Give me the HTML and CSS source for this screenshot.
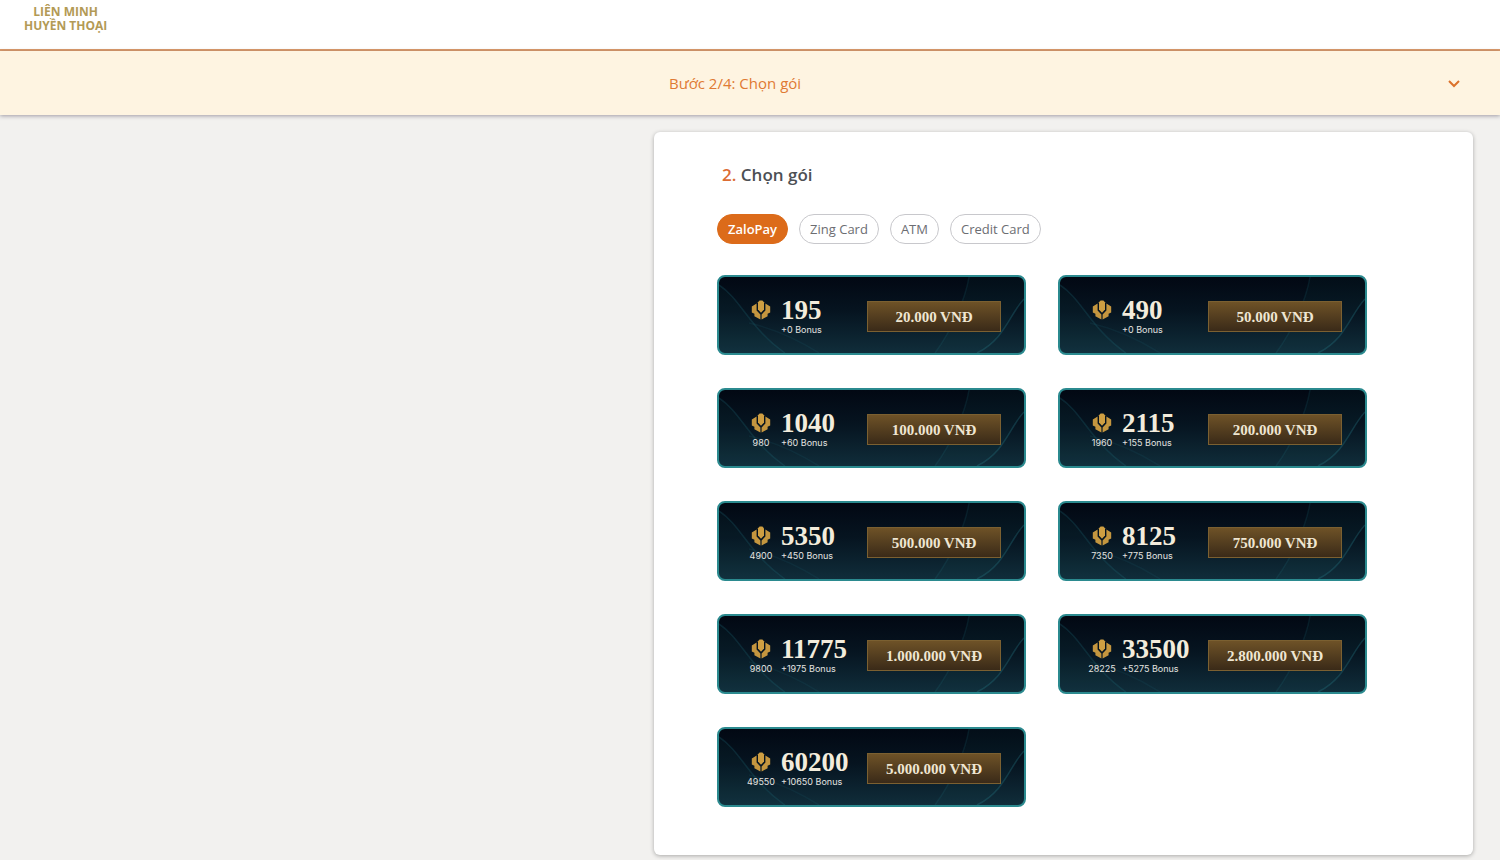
FILE: index.html
```html
<!DOCTYPE html>
<html lang="vi">
<head>
<meta charset="utf-8">
<meta name="viewport" content="width=device-width, initial-scale=1">
<title>Liên Minh Huyền Thoại</title>
<link rel="stylesheet" href="styles.css">
</head>
<body>
<svg class="defs" aria-hidden="true">
  <symbol id="coin" viewBox="0 0 20 20">
    <path fill="#cf9f42" d="M7 2.2 8.6.4h2.8L13 2.2v7.4L10 12.8 7 9.6z"/>
    <path fill="#c4963f" d="M5.6 3.6v7l3.8 3.8v5.2L3.4 16.2v-2.4L.8 12.4V6.6z"/>
    <path fill="#c4963f" d="M14.4 3.6v7l-3.8 3.8v5.2l6-3.4v-2.4l2.6-1.4V6.6z"/>
  </symbol>
  <symbol id="swirl" viewBox="0 0 305 76" preserveAspectRatio="none">
    <g fill="none" stroke="#2a8290" stroke-width="1.5">
      <path stroke-opacity=".2" d="M0 8C22 22 31 52 66 76"/>
      <path stroke-opacity=".1" d="M30 46C56 52 78 62 100 76"/>
      <path stroke-opacity=".15" d="M250 0C246 24 232 54 216 76"/>
      <path stroke-opacity=".3" d="M305 22C290 38 286 62 258 76"/>
    </g>
    <path fill="#2a8290" fill-opacity=".05" d="M305 22C290 38 286 62 258 76H216C232 54 246 24 250 0H305zM0 8C22 22 31 52 66 76H0z"/>
  </symbol>
</svg>

<header class="header">
  <a class="logo" href="#">LIÊN MINH<br>HUYỀN THOẠI</a>
</header>

<button class="stepbar" type="button">
  <span class="stepbar-text">Bước 2/4: Chọn gói</span>
  <svg class="chevron" viewBox="0 0 14 14" aria-hidden="true"><path d="M2 5 7 10 12 5"/></svg>
</button>

<main class="main">
  <section class="panel">
    <h1 class="title"><span class="title-no">2.</span> Chọn gói</h1>
    <div class="methods">
      <button class="pill pill-active" type="button">ZaloPay</button>
      <button class="pill" type="button">Zing Card</button>
      <button class="pill" type="button">ATM</button>
      <button class="pill" type="button">Credit Card</button>
    </div>
    <div class="packs">
      <article class="pack"><svg class="swirl"><use href="#swirl"/></svg><div class="info"><svg class="coin"><use href="#coin"/></svg><strong class="total">195</strong><span class="base"></span><span class="bonus">+0 Bonus</span></div><button class="price" type="button">20.000 VNĐ</button></article>
      <article class="pack"><svg class="swirl"><use href="#swirl"/></svg><div class="info"><svg class="coin"><use href="#coin"/></svg><strong class="total">490</strong><span class="base"></span><span class="bonus">+0 Bonus</span></div><button class="price" type="button">50.000 VNĐ</button></article>
      <article class="pack"><svg class="swirl"><use href="#swirl"/></svg><div class="info"><svg class="coin"><use href="#coin"/></svg><strong class="total">1040</strong><span class="base">980</span><span class="bonus">+60 Bonus</span></div><button class="price" type="button">100.000 VNĐ</button></article>
      <article class="pack"><svg class="swirl"><use href="#swirl"/></svg><div class="info"><svg class="coin"><use href="#coin"/></svg><strong class="total">2115</strong><span class="base">1960</span><span class="bonus">+155 Bonus</span></div><button class="price" type="button">200.000 VNĐ</button></article>
      <article class="pack"><svg class="swirl"><use href="#swirl"/></svg><div class="info"><svg class="coin"><use href="#coin"/></svg><strong class="total">5350</strong><span class="base">4900</span><span class="bonus">+450 Bonus</span></div><button class="price" type="button">500.000 VNĐ</button></article>
      <article class="pack"><svg class="swirl"><use href="#swirl"/></svg><div class="info"><svg class="coin"><use href="#coin"/></svg><strong class="total">8125</strong><span class="base">7350</span><span class="bonus">+775 Bonus</span></div><button class="price" type="button">750.000 VNĐ</button></article>
      <article class="pack"><svg class="swirl"><use href="#swirl"/></svg><div class="info"><svg class="coin"><use href="#coin"/></svg><strong class="total">11775</strong><span class="base">9800</span><span class="bonus">+1975 Bonus</span></div><button class="price" type="button">1.000.000 VNĐ</button></article>
      <article class="pack"><svg class="swirl"><use href="#swirl"/></svg><div class="info"><svg class="coin"><use href="#coin"/></svg><strong class="total">33500</strong><span class="base">28225</span><span class="bonus">+5275 Bonus</span></div><button class="price" type="button">2.800.000 VNĐ</button></article>
      <article class="pack"><svg class="swirl"><use href="#swirl"/></svg><div class="info"><svg class="coin"><use href="#coin"/></svg><strong class="total">60200</strong><span class="base">49550</span><span class="bonus">+10650 Bonus</span></div><button class="price" type="button">5.000.000 VNĐ</button></article>
    </div>
  </section>
</main>
</body>
</html>
```
FILE: styles.css
```css
* { box-sizing: border-box; }

body {
  margin: 0;
  min-height: 100vh;
  background: #f2f1ef;
  color: #4c4f54;
  font-family: "Open Sans", "Noto Sans", sans-serif;
}

button {
  font-family: inherit;
  cursor: pointer;
}

.defs {
  position: absolute;
  width: 0;
  height: 0;
}

.header {
  height: 51px;
  padding: 5px 24px;
  background: #fff;
  border-bottom: 2px solid #dc9b6b;
}

.logo {
  display: inline-block;
  color: #b39a55;
  font-size: 12px;
  font-weight: 700;
  line-height: 14px;
  text-align: center;
  text-decoration: none;
}

.stepbar {
  position: relative;
  display: grid;
  grid-template-columns: 654fr 819fr;
  align-items: center;
  width: 100%;
  height: 64px;
  padding: 0 27px 0 0;
  border: 0;
  background: #fef4e1;
  box-shadow: 0 1px 4px rgba(60, 50, 70, .45);
  color: #e07a33;
  text-align: left;
}

.stepbar-text {
  grid-column: 2;
  grid-row: 1;
  padding-left: 15px;
  font-size: 15px;
  line-height: 20px;
}

.chevron {
  grid-column: 2;
  grid-row: 1;
  justify-self: end;
  width: 14px;
  height: 14px;
  margin-right: 12px;
  fill: none;
  stroke: #dc722c;
  stroke-width: 2;
}

.main {
  display: grid;
  grid-template-columns: 654fr 819fr;
  padding: 17px 27px 5px 0;
}

.panel {
  grid-column: 2;
  padding: 31px 106px 48px 63px;
  background: #fff;
  border-radius: 6px;
  box-shadow: 0 1px 4px rgba(0, 0, 0, .3);
}

.title {
  margin: 0 0 27px;
  padding-left: 5px;
  font-size: 17px;
  font-weight: 600;
  line-height: 24px;
}

.title-no { color: #dc6c33; }

.methods {
  display: flex;
  flex-wrap: wrap;
  gap: 11px;
  margin-bottom: 31px;
}

.pill {
  height: 30px;
  padding: 0 10px;
  border: 1px solid #c8c8cc;
  border-radius: 15px;
  background: #fff;
  color: #6c6d72;
  font-size: 13px;
  line-height: 16px;
}

.pill-active {
  border-color: #dc6b1a;
  background: #dc6b1a;
  color: #fff;
  font-weight: 600;
}

.packs {
  display: grid;
  grid-template-columns: 1fr 1fr;
  gap: 33px 32px;
}

.pack {
  position: relative;
  display: flex;
  align-items: center;
  justify-content: space-between;
  height: 80px;
  padding: 3px 23px 0 27px;
  border: 2px solid #2b8a8f;
  border-radius: 8px;
  background: linear-gradient(#020813, #061420 45%, #102d3a);
  overflow: hidden;
}

.swirl {
  position: absolute;
  inset: 0;
  width: 100%;
  height: 100%;
}

.info {
  position: relative;
  display: grid;
  grid-template-columns: 30px auto;
  grid-template-rows: 26px 14px;
  column-gap: 5px;
  align-items: center;
}

.coin {
  justify-self: center;
  width: 20px;
  height: 20px;
}

.total {
  color: #f3ecdc;
  font-family: "Liberation Serif", serif;
  font-size: 27px;
  line-height: 26px;
}

.base,
.bonus {
  color: #e4e4e0;
  font-family: Inter, sans-serif;
  font-size: 9px;
  line-height: 14px;
  white-space: nowrap;
}

.base { justify-self: center; }

.price {
  position: relative;
  width: 134px;
  height: 31px;
  padding: 0;
  border: 1px solid #7b6031;
  background: linear-gradient(#6e5227, #3a2a18);
  color: #efe6d2;
  font-family: "Liberation Serif", serif;
  font-size: 15px;
  font-weight: 700;
  line-height: 20px;
}
```
